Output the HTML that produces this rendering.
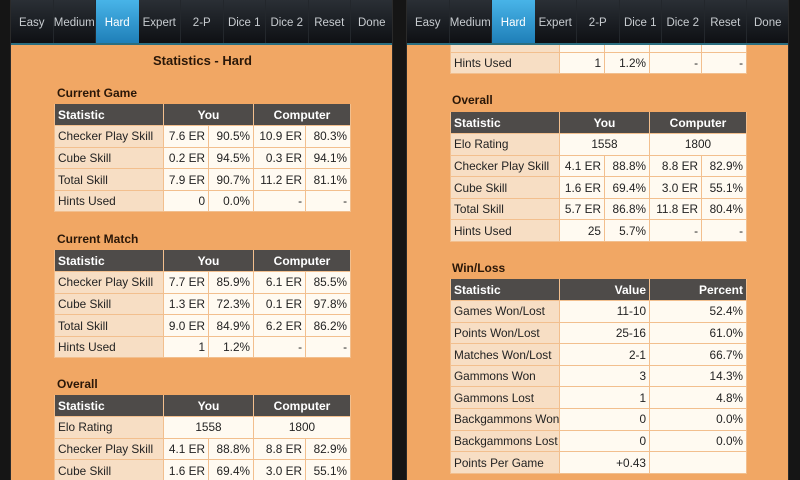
<!DOCTYPE html>
<html><head><meta charset="utf-8"><style>
*{margin:0;padding:0;box-sizing:border-box}
body{width:800px;height:480px;background:#151515;position:relative;overflow:hidden;font-family:"Liberation Sans","DejaVu Sans",sans-serif;}
.panel{position:absolute;top:0;width:383px;height:480px;background:#f1a764;overflow:hidden;border-left:1px solid #2a2a2a;border-right:1px solid #2a2a2a}
.bar{position:absolute;left:0;top:0;width:383px;height:45px;background:linear-gradient(#2a2f35,#0e1014);border-bottom:2px solid #2b6e80;display:flex}
.bar div{width:42.5px;height:43px;line-height:46px;text-align:center;color:#c8ccd0;font-size:11.5px;border-right:1px solid #23272c;white-space:nowrap}
.bar div.on{background:linear-gradient(#48b4e8,#1f7fb8);color:#fff;border-right:none}
h1{position:absolute;font-size:13px;font-weight:bold;color:#2a1708;width:383px;text-align:center}
h2{position:absolute;font-size:12px;font-weight:bold;color:#2a1708}
table{position:absolute;border-collapse:collapse;font-size:11.8px;color:#222;table-layout:fixed;width:296px}
td{height:21.6px;border:1px solid #f2bf8e;background:#fffaf1;text-align:right;padding:0 3px;white-space:nowrap;overflow:hidden}
td.s{background:#f7dec4;text-align:left;padding-left:3px}
tr.h td{background:#4e4b49;color:#fff;font-weight:bold;text-align:center;border-color:#f2bf8e;border-top:none;font-size:12px}
tr.h td.s{text-align:left}
tr.h td.r{text-align:right}
</style></head><body>

<div class="panel" style="left:10px">
<div class="bar"><div>Easy</div><div>Medium</div><div class="on">Hard</div><div>Expert</div><div>2-P</div><div>Dice 1</div><div>Dice 2</div><div>Reset</div><div>Done</div></div>
<h1 style="top:53px">Statistics - Hard</h1>
<h2 style="left:46px;top:86px">Current Game</h2>
<table style="left:43px;top:104px">
<colgroup><col style="width:109px"><col style="width:45px"><col style="width:45px"><col style="width:52px"><col style="width:45px"></colgroup>
<tr class="h"><td class="s">Statistic</td><td colspan="2">You</td><td colspan="2">Computer</td></tr>
<tr><td class="s">Checker Play Skill</td><td>7.6 ER</td><td>90.5%</td><td>10.9 ER</td><td>80.3%</td></tr>
<tr><td class="s">Cube Skill</td><td>0.2 ER</td><td>94.5%</td><td>0.3 ER</td><td>94.1%</td></tr>
<tr><td class="s">Total Skill</td><td>7.9 ER</td><td>90.7%</td><td>11.2 ER</td><td>81.1%</td></tr>
<tr><td class="s">Hints Used</td><td>0</td><td>0.0%</td><td>-</td><td>-</td></tr>
</table>
<h2 style="left:46px;top:232px">Current Match</h2>
<table style="left:43px;top:250px">
<colgroup><col style="width:109px"><col style="width:45px"><col style="width:45px"><col style="width:52px"><col style="width:45px"></colgroup>
<tr class="h"><td class="s">Statistic</td><td colspan="2">You</td><td colspan="2">Computer</td></tr>
<tr><td class="s">Checker Play Skill</td><td>7.7 ER</td><td>85.9%</td><td>6.1 ER</td><td>85.5%</td></tr>
<tr><td class="s">Cube Skill</td><td>1.3 ER</td><td>72.3%</td><td>0.1 ER</td><td>97.8%</td></tr>
<tr><td class="s">Total Skill</td><td>9.0 ER</td><td>84.9%</td><td>6.2 ER</td><td>86.2%</td></tr>
<tr><td class="s">Hints Used</td><td>1</td><td>1.2%</td><td>-</td><td>-</td></tr>
</table>
<h2 style="left:46px;top:377px">Overall</h2>
<table style="left:43px;top:395px">
<colgroup><col style="width:109px"><col style="width:45px"><col style="width:45px"><col style="width:52px"><col style="width:45px"></colgroup>
<tr class="h"><td class="s">Statistic</td><td colspan="2">You</td><td colspan="2">Computer</td></tr>
<tr><td class="s">Elo Rating</td><td colspan="2" style="text-align:center">1558</td><td colspan="2" style="text-align:center">1800</td></tr>
<tr><td class="s">Checker Play Skill</td><td>4.1 ER</td><td>88.8%</td><td>8.8 ER</td><td>82.9%</td></tr>
<tr><td class="s">Cube Skill</td><td>1.6 ER</td><td>69.4%</td><td>3.0 ER</td><td>55.1%</td></tr>
</table>
</div>

<div class="panel" style="left:406px">
<table style="left:43px;top:30px">
<colgroup><col style="width:109px"><col style="width:45px"><col style="width:45px"><col style="width:52px"><col style="width:45px"></colgroup>
<tr><td class="s"></td><td></td><td></td><td></td><td></td></tr>
<tr><td class="s">Hints Used</td><td>1</td><td>1.2%</td><td>-</td><td>-</td></tr>
</table>
<div class="bar"><div>Easy</div><div>Medium</div><div class="on">Hard</div><div>Expert</div><div>2-P</div><div>Dice 1</div><div>Dice 2</div><div>Reset</div><div>Done</div></div>
<h2 style="left:45px;top:93px">Overall</h2>
<table style="left:43px;top:112px">
<colgroup><col style="width:109px"><col style="width:45px"><col style="width:45px"><col style="width:52px"><col style="width:45px"></colgroup>
<tr class="h"><td class="s">Statistic</td><td colspan="2">You</td><td colspan="2">Computer</td></tr>
<tr><td class="s">Elo Rating</td><td colspan="2" style="text-align:center">1558</td><td colspan="2" style="text-align:center">1800</td></tr>
<tr><td class="s">Checker Play Skill</td><td>4.1 ER</td><td>88.8%</td><td>8.8 ER</td><td>82.9%</td></tr>
<tr><td class="s">Cube Skill</td><td>1.6 ER</td><td>69.4%</td><td>3.0 ER</td><td>55.1%</td></tr>
<tr><td class="s">Total Skill</td><td>5.7 ER</td><td>86.8%</td><td>11.8 ER</td><td>80.4%</td></tr>
<tr><td class="s">Hints Used</td><td>25</td><td>5.7%</td><td>-</td><td>-</td></tr>
</table>
<h2 style="left:45px;top:261px">Win/Loss</h2>
<table style="left:43px;top:279px">
<colgroup><col style="width:109px"><col style="width:90px"><col style="width:97px"></colgroup>
<tr class="h"><td class="s">Statistic</td><td class="r">Value</td><td class="r">Percent</td></tr>
<tr><td class="s">Games Won/Lost</td><td>11-10</td><td>52.4%</td></tr>
<tr><td class="s">Points Won/Lost</td><td>25-16</td><td>61.0%</td></tr>
<tr><td class="s">Matches Won/Lost</td><td>2-1</td><td>66.7%</td></tr>
<tr><td class="s">Gammons Won</td><td>3</td><td>14.3%</td></tr>
<tr><td class="s">Gammons Lost</td><td>1</td><td>4.8%</td></tr>
<tr><td class="s">Backgammons Won</td><td>0</td><td>0.0%</td></tr>
<tr><td class="s">Backgammons Lost</td><td>0</td><td>0.0%</td></tr>
<tr><td class="s">Points Per Game</td><td>+0.43</td><td></td></tr>
</table>
</div>
</body></html>
